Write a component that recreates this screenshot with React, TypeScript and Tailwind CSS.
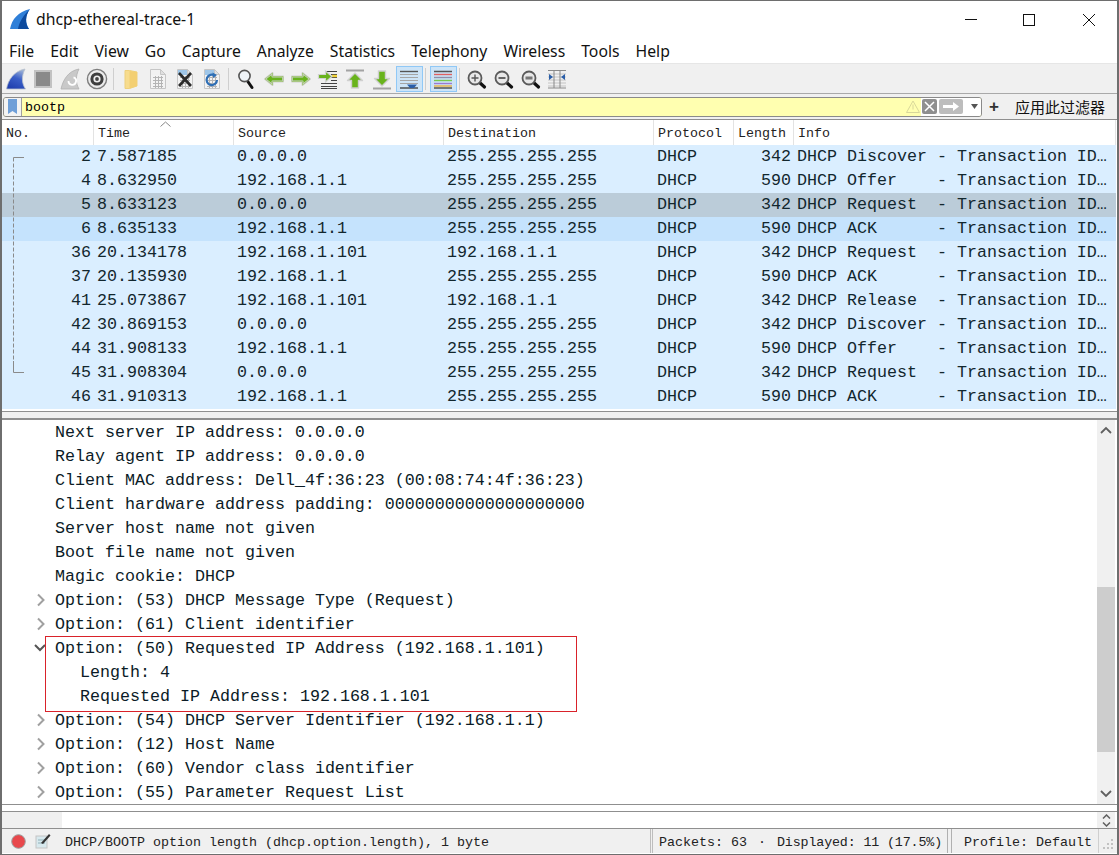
import React from "react";

const mono = "font-['Liberation_Mono','DejaVu_Sans_Mono',monospace]";

const packets = [
  ["2", "7.587185", "0.0.0.0", "255.255.255.255", "342", "DHCP Discover - Transaction ID…"],
  ["4", "8.632950", "192.168.1.1", "255.255.255.255", "590", "DHCP Offer    - Transaction ID…"],
  ["5", "8.633123", "0.0.0.0", "255.255.255.255", "342", "DHCP Request  - Transaction ID…"],
  ["6", "8.635133", "192.168.1.1", "255.255.255.255", "590", "DHCP ACK      - Transaction ID…"],
  ["36", "20.134178", "192.168.1.101", "192.168.1.1", "342", "DHCP Request  - Transaction ID…"],
  ["37", "20.135930", "192.168.1.1", "255.255.255.255", "590", "DHCP ACK      - Transaction ID…"],
  ["41", "25.073867", "192.168.1.101", "192.168.1.1", "342", "DHCP Release  - Transaction ID…"],
  ["42", "30.869153", "0.0.0.0", "255.255.255.255", "342", "DHCP Discover - Transaction ID…"],
  ["44", "31.908133", "192.168.1.1", "255.255.255.255", "590", "DHCP Offer    - Transaction ID…"],
  ["45", "31.908304", "0.0.0.0", "255.255.255.255", "342", "DHCP Request  - Transaction ID…"],
  ["46", "31.910313", "192.168.1.1", "255.255.255.255", "590", "DHCP ACK      - Transaction ID…"],
];

const details: [string, number, string][] = [
  ["Next server IP address: 0.0.0.0", 0, ""],
  ["Relay agent IP address: 0.0.0.0", 0, ""],
  ["Client MAC address: Dell_4f:36:23 (00:08:74:4f:36:23)", 0, ""],
  ["Client hardware address padding: 00000000000000000000", 0, ""],
  ["Server host name not given", 0, ""],
  ["Boot file name not given", 0, ""],
  ["Magic cookie: DHCP", 0, ""],
  ["Option: (53) DHCP Message Type (Request)", 0, "r"],
  ["Option: (61) Client identifier", 0, "r"],
  ["Option: (50) Requested IP Address (192.168.1.101)", 0, "d"],
  ["Length: 4", 1, ""],
  ["Requested IP Address: 192.168.1.101", 1, ""],
  ["Option: (54) DHCP Server Identifier (192.168.1.1)", 0, "r"],
  ["Option: (12) Host Name", 0, "r"],
  ["Option: (60) Vendor class identifier", 0, "r"],
  ["Option: (55) Parameter Request List", 0, "r"],
];

const Ico = ({ children, className = "" }: { children: React.ReactNode; className?: string }) => (
  <svg width="22" height="22" viewBox="0 0 22 22" className={`shrink-0 ${className}`}>
    {children}
  </svg>
);

const Grid = ({ c = "#b4b4b4" }: { c?: string }) => (
  <path d="M6 9.5h10M6 12.5h10M6 15.5h10M6 18.5h10M8.5 8v12M11.5 8v12M14.5 8v12" stroke={c} strokeWidth="1" fill="none" />
);

const Doc = ({ children, top = "#f1f1f1" }: { children?: React.ReactNode; top?: string }) => (
  <Ico>
    <path d="M3.5 1.5h10l5 5v14h-15z" fill="#f3f3f3" stroke="#c6c6c6" />
    <path d="M4 2h9.5v5H4z" fill={top} />
    <path d="M13.5 1.5v5h5z" fill="#e0e0e0" stroke="#c6c6c6" />
    <Grid />
    {children}
  </Ico>
);

const Arrow = ({ d, className = "" }: { d: string; className?: string }) => (
  <Ico className={className}>
    <path d={d} fill="#69b31c" stroke="#cfcfcf" strokeWidth="2" strokeLinejoin="round" />
    <path d={d} fill="none" stroke="#8fc34e" strokeWidth="0.6" strokeLinejoin="round" />
  </Ico>
);

const Lens = ({ sign }: { sign: string }) => (
  <Ico>
    <path d="M14 14 L19.5 19" stroke="#111" strokeWidth="3.2" strokeLinecap="round" />
    <circle cx="10" cy="10" r="6.5" fill="#e8e8e8" stroke="#5a5a5a" strokeWidth="1.8" />
    {sign === "+" && <path d="M6.5 10h7M10 6.5v7" stroke="#555" strokeWidth="1.4" />}
    {sign === "-" && <path d="M6.5 10h7" stroke="#555" strokeWidth="1.8" />}
    {sign === "=" && <path d="M6.5 10h7" stroke="#777" strokeWidth="3" />}
  </Ico>
);

const Sep = ({ className = "" }: { className?: string }) => <div className={`h-[22px] w-px shrink-0 bg-[#cfcfcf] ${className}`} />;

function Toolbar() {
  return (
    <div className="flex h-[30px] items-center gap-[5px] border-b border-[#a9a9a9] bg-[#f0f0f0] pl-[3px]">
      <Ico>
        <defs>
          <linearGradient id="finA" x1="0.7" y1="0" x2="0.3" y2="1">
            <stop offset="0" stopColor="#9fb4d6" />
            <stop offset="0.45" stopColor="#3a5fc8" />
            <stop offset="1" stopColor="#1f3fae" />
          </linearGradient>
        </defs>
        <path d="M1.5 21 C3 12 9 3 20 1 C16.5 8 16.5 15 20.5 21 Z" fill="url(#finA)" stroke="#b8c0cc" strokeWidth="0.8" />
      </Ico>
      <Ico>
        <rect x="3" y="3" width="16" height="16" fill="#8a8a8a" stroke="#c2c2c2" strokeWidth="2" />
      </Ico>
      <Ico>
        <path d="M2 21 C4 12 9 3 20 1 C16.5 8 16.5 15 20 21 Z" fill="#c9c9c9" stroke="#b0b0b0" strokeWidth="0.8" />
        <path d="M9.5 13a3.8 3.8 0 1 0 5-3.6" stroke="#fff" strokeWidth="1.8" fill="none" />
      </Ico>
      <Ico>
        <circle cx="11" cy="11" r="9.6" fill="#ececec" stroke="#7d7d7d" strokeWidth="1.4" />
        <circle cx="11" cy="11" r="6.6" fill="#3f3f3f" />
        <circle cx="11" cy="11" r="3.6" fill="#f0f0f0" />
        <circle cx="11" cy="11" r="1.9" fill="#444" />
      </Ico>
      <Sep className="mr-[1px]" />
      <Ico>
        <path d="M5 2.5h4.5L17 4v14l-7.5 2.5H5z" fill="#f7dc8e" stroke="#eed07c" />
        <path d="M9.5 3L17 4v14l-7.5 2.5z" fill="#f3cf72" />
      </Ico>
      <Doc />
      <Doc top="#9fc6e8">
        <path d="M5 5l12 13M17 5L5 18" stroke="#2a2a2a" strokeWidth="2.6" />
      </Doc>
      <Doc top="#9fc6e8">
        <path d="M16 12a5.2 5.2 0 1 1-2.2-4.4" stroke="#2f6fb5" strokeWidth="2.2" fill="none" />
        <path d="M11.5 4.5l4.5 2.6-3.8 3z" fill="#2f6fb5" />
      </Doc>
      <Sep className="mr-[1px]" />
      <Ico>
        <path d="M12.5 13L17 19.5" stroke="#111" strokeWidth="3" strokeLinecap="round" />
        <circle cx="9.5" cy="8" r="5.6" fill="#eef3f7" stroke="#555" strokeWidth="1.6" />
      </Ico>
      <Arrow className="ml-[1px]" d="M2 11l7.5-6v3.5H20v5H9.5V17z" />
      <Arrow d="M20 11l-7.5-6v3.5H2v5h10.5V17z" />
      <Ico>
        <path d="M8 3.5h12M14 6.5h6M14 9.5h6M14 12.5h6M4 15.5h16M4 18.5h16M4 20.5h16" stroke="#444" strokeWidth="1" />
        <path d="M15 8h5" stroke="#f2d33a" strokeWidth="2.4" />
        <path d="M1.5 6.5h7V3l6.5 5.5L8.5 14v-3.5h-7z" fill="#69b31c" stroke="#d2d2d2" strokeWidth="1.2" />
      </Ico>
      <Ico>
        <path d="M2 2.5h18" stroke="#a3a3a3" strokeWidth="2" />
        <path d="M11 5l7.5 7.5H14.5V20h-7v-7.5H3.5z" fill="#69b31c" stroke="#cfcfcf" strokeWidth="1.4" strokeLinejoin="round" />
      </Ico>
      <Ico>
        <path d="M2 20.5h18" stroke="#a3a3a3" strokeWidth="2" />
        <path d="M11 18l7.5-7.5H14.5V3h-7v7.5H3.5z" fill="#69b31c" stroke="#cfcfcf" strokeWidth="1.4" strokeLinejoin="round" />
      </Ico>
      <div className="mx-[-2.5px] flex h-[26px] w-[27px] shrink-0 items-center justify-center border border-[#90c8f6] bg-[#cde4f7]">
        <Ico>
          <path d="M2 6.5h18M2 9.5h18M2 12.5h18M2 15.5h18" stroke="#a5a5a5" strokeWidth="1" />
          <path d="M2 3.5h18" stroke="#555" strokeWidth="1.4" />
          <path d="M2 20h18" stroke="#444" strokeWidth="1.4" />
          <path d="M9 16.5h10l-3 3.5h-4z" fill="#2a5ea8" />
        </Ico>
      </div>
      <Sep className="mr-[1px]" />
      <div className="mx-[-2.5px] flex h-[26px] w-[27px] shrink-0 items-center justify-center border border-[#90c8f6] bg-[#cde4f7]">
        <Ico>
          <path d="M2 3.5h18M2 20h18" stroke="#555" strokeWidth="1.4" />
          <path d="M2 6.5h18" stroke="#e06060" strokeWidth="1.4" />
          <path d="M2 9.5h18" stroke="#8f8fa8" strokeWidth="1.4" />
          <path d="M2 12.5h18" stroke="#78c850" strokeWidth="1.4" />
          <path d="M2 15.5h18" stroke="#9a7ad0" strokeWidth="1.4" />
          <path d="M2 18h18" stroke="#e8b040" strokeWidth="1.4" />
        </Ico>
      </div>
      <Sep />
      <Lens sign="+" />
      <Lens sign="-" />
      <Lens sign="=" />
      <Ico>
        <path d="M2 6h18M2 9h18M2 12h18M2 15h18M2 18h18" stroke="#c4c4c4" />
        <path d="M2 2.5h18M2 20h18" stroke="#8a8a8a" />
        <path d="M8 2v18M14 2v18" stroke="#888" />
        <path d="M3 6l4 3-4 3zM19 6l-4 3 4 3z" fill="#2a5ea8" />
      </Ico>
    </div>
  );
}

function FilterBar() {
  return (
    <div className="flex h-[26px] items-center border-b border-[#8f8f8f] bg-[#f0f0f0] pl-[1px]">
      <div className="flex h-[20px] w-[979px] items-center overflow-hidden rounded-[3px] border border-[#8a8a8a] bg-[#ffffb0]">
        <div className="flex h-full w-[18px] shrink-0 items-center justify-center border-r border-[#a0a0a0] bg-[#f3f3f3]">
          <svg width="9" height="15" viewBox="0 0 9 15"><path d="M0 0h9v15l-4.5-3L0 15z" fill="#6f9fd8" /></svg>
        </div>
        <span className={`${mono} pl-[3px] pt-[2px] text-[13.33px] leading-none text-black`}>bootp</span>
        <div className="ml-auto flex h-full items-center">
          <svg width="14" height="13" viewBox="0 0 14 13" className="mr-[1px]"><path d="M7 1L13.5 12.5H.5z" fill="none" stroke="#d8d79a" /><path d="M7 4.5v5" stroke="#d8d79a" /></svg>
          <div className="flex h-full w-[60px] items-center bg-white pl-[1px]">
            <svg width="15" height="15" viewBox="0 0 15 15"><rect width="15" height="15" rx="2" fill="#8f8f8f" /><path d="M3 3l9 9M12 3l-9 9" stroke="#fff" strokeWidth="1.5" /></svg>
            <svg width="24" height="15" viewBox="0 0 24 15" className="ml-[2px]"><rect width="24" height="15" rx="2" fill="#bdbdbd" /><path d="M4 6h10V3l6 4.5-6 4.5V9H4z" fill="#fff" /></svg>
            <svg width="9" height="5" viewBox="0 0 9 5" className="ml-[7px]"><path d="M1 0h7L4.5 5z" fill="#555" /></svg>
          </div>
        </div>
      </div>
      <span className="ml-[5px] w-[14px] text-center font-['Liberation_Sans',sans-serif] text-[17px] font-bold leading-none text-[#333]">+</span>
      <span className="ml-[14px] font-['Noto_Sans_CJK_SC',sans-serif] text-[15px] leading-none text-[#111]">应用此过滤器</span>
    </div>
  );
}

const colClass = "grid grid-cols-[92px_140px_210px_210px_80px_60px_1fr]";

function PacketList() {
  return (
    <div className="border-b border-[#8f8f8f] bg-white pb-[2px]">
      <div className={`${colClass} relative mr-[1px] h-[25px] items-center ${mono} text-[13.33px] text-[#222]`}>
        {["No.", "Time", "Source", "Destination", "Protocol", "Length", "Info"].map((h) => (
          <div key={h} className="flex h-full items-center border-r border-[#e3e3e3] pl-[4px] pt-[3px] last:border-r-0">{h}</div>
        ))}
        <svg width="11" height="6" viewBox="0 0 11 6" className="absolute left-[158px] top-[1px]"><path d="M0.5 5.5L5.5 1l5 4.5" fill="none" stroke="#888" /></svg>
      </div>
      <div className={`relative mr-[1px] ${mono} text-[16.67px] text-[#12272e]`}>
        {packets.map((p, i) => (
          <div
            key={p[0]}
            className={`${colClass} h-[24px] items-center whitespace-pre leading-none ${
              i === 2 ? "bg-[#bbccd9]" : i === 3 ? "bg-[#c5e3fd]" : "bg-[#daeeff]"
            }`}
          >
            <div className="pr-[3px] text-right">{p[0]}</div>
            <div className="pl-[3px]">{p[1]}</div>
            <div className="pl-[3px]">{p[2]}</div>
            <div className="pl-[3px]">{p[3]}</div>
            <div className="pl-[3px]">DHCP</div>
            <div className="pr-[3px] text-right">{p[4]}</div>
            <div className="pl-[3px]">{p[5]}</div>
          </div>
        ))}
        <svg width="14" height="220" viewBox="0 0 14 220" className="absolute left-[9px] top-[12px]">
          <path d="M13 0.5H2.5" stroke="#8a8a8a" fill="none" />
          <path d="M2.5 0.5V215" stroke="#8a8a8a" strokeDasharray="4 2" fill="none" />
          <path d="M2.5 204V215.5H13" stroke="#8a8a8a" fill="none" />
        </svg>
      </div>
    </div>
  );
}

function DetailPane() {
  return (
    <div className="flex h-[385px] border-b border-[#8f8f8f] bg-white">
      <div className={`relative min-w-0 flex-1 ${mono} text-[16.67px] text-[#0b1b26]`}>
        {details.map(([t, lvl, arrow]) => (
          <div key={t} className="flex h-[24px] items-center whitespace-pre leading-none">
            <div className="flex w-[53px] justify-end pr-[9px]">
              {arrow === "r" && (
                <svg width="10" height="14" viewBox="0 0 10 14"><path d="M2 1.5l5.5 5.5-5.5 5.5" fill="none" stroke="#a0a0a0" strokeWidth="2" /></svg>
              )}
              {arrow === "d" && (
                <svg width="12" height="10" viewBox="0 0 12 10"><path d="M1 2l5 5 5-5" fill="none" stroke="#555" strokeWidth="2" /></svg>
              )}
            </div>
            <span className={lvl ? "pl-[25px] pt-[2px]" : "pt-[2px]"}>{t}</span>
          </div>
        ))}
        <div className="absolute left-[43px] top-[216px] h-[76px] w-[532px] border border-[#d9222a]" />
      </div>
      <div className="mr-[2px] flex w-[18px] flex-col items-center bg-[#f0f0f0]">
        <div className="flex h-[20px] items-center">
          <svg width="12" height="8" viewBox="0 0 12 8"><path d="M1 7l5-5 5 5" fill="none" stroke="#606060" strokeWidth="1.8" /></svg>
        </div>
        <div className="mt-[147px] h-[165px] w-full bg-[#cdcdcd]" />
        <div className="mt-auto flex h-[20px] items-center">
          <svg width="12" height="8" viewBox="0 0 12 8"><path d="M1 1l5 5 5-5" fill="none" stroke="#606060" strokeWidth="1.8" /></svg>
        </div>
      </div>
    </div>
  );
}

function HexStub() {
  return (
    <div className="mt-[6px] flex h-[18px] border-y border-[#8f8f8f] bg-white">
      <div className="w-[60px] bg-[#f0f0f0]" />
      <div className="flex-1" />
      <div className="mr-[2px] flex w-[18px] flex-col items-center justify-center gap-[3px] bg-[#f0f0f0]">
        <svg width="9" height="5" viewBox="0 0 9 5"><path d="M1 4.5l3.5-3.5 3.5 3.5" fill="none" stroke="#606060" strokeWidth="1.5" /></svg>
        <svg width="9" height="5" viewBox="0 0 9 5"><path d="M1 0.5l3.5 3.5 3.5-3.5" fill="none" stroke="#606060" strokeWidth="1.5" /></svg>
      </div>
    </div>
  );
}

function StatusBar() {
  return (
    <div className={`flex h-[24px] items-center bg-[#f0f0f0] ${mono} text-[13.33px] text-[#222]`}>
      <svg width="15" height="15" viewBox="0 0 15 15" className="ml-[9px] shrink-0"><circle cx="7.5" cy="7.5" r="6.8" fill="#e8484c" stroke="#9c9c9c" /></svg>
      <svg width="16" height="16" viewBox="0 0 16 16" className="ml-[9px] shrink-0">
        <rect x="1" y="3" width="11" height="12" fill="#d8e9ee" stroke="#c4c4c4" />
        <path d="M3 7h7M3 10h7" stroke="#8fb0b8" />
        <path d="M6 10L14 1l1.5 1.5L8 11z" fill="#333" />
      </svg>
      <span className="ml-[14px] whitespace-pre pt-[4px]">DHCP/BOOTP option length (dhcp.option.length), 1 byte</span>
      <div className="ml-auto flex h-full items-center">
        <div className="h-full w-[3px] border-x border-[#bdbdbd]" />
        <span className="ml-[6px] whitespace-pre pt-[4px]">Packets: 63</span>
        <span className="w-[30px] pt-[4px] text-center">·</span>
        <span className="whitespace-pre pt-[4px] tracking-[-0.14px]">Displayed: 11 (17.5%)</span>
        <div className="ml-[5px] h-full w-[5px] border-x border-[#b0b0b0]" />
        <span className="ml-[12px] whitespace-pre pt-[4px]">Profile: Default</span>
        <div className="ml-[6px] h-full w-px bg-[#cfcfcf]" />
        <svg width="14" height="14" viewBox="0 0 14 14" className="ml-[2px] mr-[2px] mt-[6px] shrink-0">
          <path d="M10 2h2v2h-2zM6 6h2v2H6zM10 6h2v2h-2zM2 10h2v2H2zM6 10h2v2H6zM10 10h2v2h-2z" fill="#c2c2c2" />
        </svg>
      </div>
    </div>
  );
}

export default function App() {
  return (
    <div className="flex h-[855px] w-[1119px] flex-col overflow-hidden border-x-2 border-y border-[#6e6e6e] bg-white font-['Noto_Sans',sans-serif]">
      <div className="flex h-[37px] shrink-0 items-center bg-white">
        <svg width="21" height="21" viewBox="0 0 21 21" className="ml-[8px]">
          <path d="M0 20 C2 10 8 3 20 0 C15 7 15 14 19 20 Z" fill="#2f7fd8" />
          <path d="M8 20 C9 13 13 7 20 0 C15 7 15 14 19 20 Z" fill="#0d4a9e" />
        </svg>
        <span className="ml-[5px] text-[15.75px] leading-none text-[#111]">dhcp-ethereal-trace-1</span>
        <div className="ml-auto flex items-center">
          <svg width="46" height="14" viewBox="0 0 46 14"><path d="M11 6.5h12" stroke="#111" /></svg>
          <svg width="58" height="14" viewBox="0 0 58 14"><rect x="23.5" y="1.5" width="11" height="11" fill="none" stroke="#111" /></svg>
          <svg width="59" height="14" viewBox="0 0 59 14"><path d="M25 1l12 12M37 1L25 13" stroke="#111" /></svg>
        </div>
      </div>
      <div className="flex h-[26px] shrink-0 items-center gap-[16px] border-b border-[#e6e6e6] pl-[7px] pt-[2px] text-[15.75px] leading-none text-[#111]">
        {["File", "Edit", "View", "Go", "Capture", "Analyze", "Statistics", "Telephony", "Wireless", "Tools", "Help"].map((m) => (
          <span key={m}>{m}</span>
        ))}
      </div>
      <Toolbar />
      <FilterBar />
      <PacketList />
      <div className="h-[8px] shrink-0 border-b-2 border-[#8f8f8f] bg-[#f0f0f0]" />
      <DetailPane />
      <HexStub />
      <StatusBar />
    </div>
  );
}
